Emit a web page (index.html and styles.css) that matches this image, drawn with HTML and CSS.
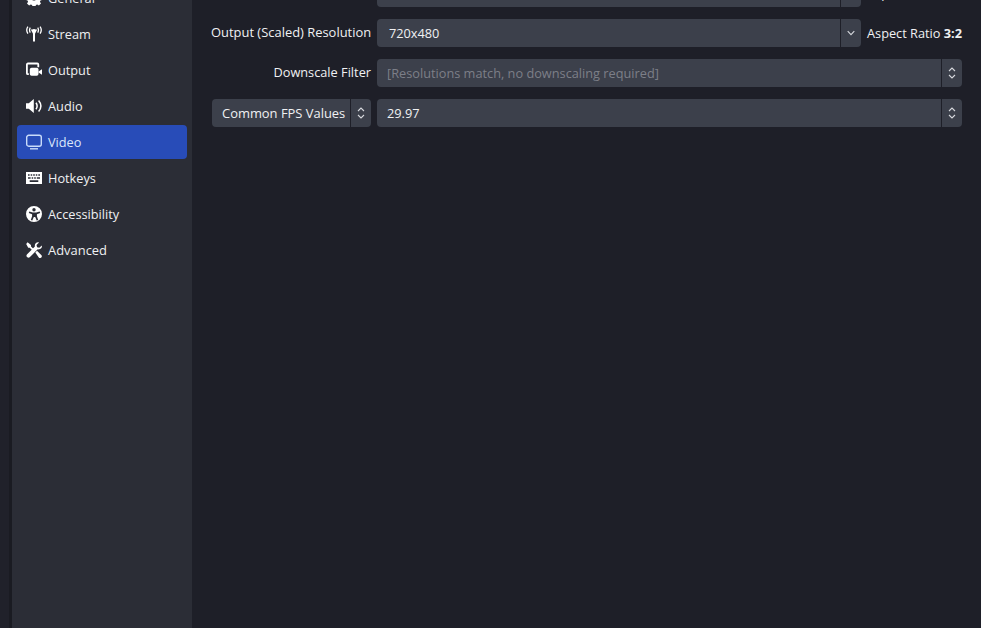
FILE: index.html
```html
<!DOCTYPE html>
<html lang="en">
<head>
<meta charset="utf-8">
<title>Settings</title>
<link rel="stylesheet" href="styles.css">
</head>
<body>
<div class="window">
  <nav class="sidebar">
    <a class="item"><svg class="icon" viewBox="0 0 16 16"><path fill="#fff" fill-rule="evenodd" d="M6.500 0h3l.4 2 1.300.6 1.700-1.100 2.100 2.100-1.100 1.700.6 1.300 2 .4v3l-2 .4-.6 1.300 1.100 1.700-2.100 2.100-1.700-1.100-1.300.6-.4 2h-3l-.4-2-1.300-.6-1.700 1.100-2.100-2.100 1.100-1.700-.6-1.300-2-.4v-3l2-.4.6-1.300L1.400 3.600 3.500 1.500l1.700 1.100 1.300-.6zM8 5.500a2.500 2.500 0 1 0 0 5 2.500 2.500 0 0 0 0-5z"/></svg><span>General</span></a>
    <a class="item"><svg class="icon" viewBox="0 0 16 16"><path fill="#fff" d="M4.800 3.600h6.400L9 7.800v7.700H7V7.800z"/><circle cx="8" cy="4.600" r="1.700" fill="#fff"/><path fill="none" stroke="#fff" stroke-width="1.300" d="M4.300 1.600C3.300 3.200 3.300 5 4.300 6.600M1.900.6C.3 3 .3 5.200 1.900 7.600M11.700 1.600c1 1.600 1 3.400 0 5M14.100.6c1.600 2.400 1.600 4.600 0 7"/></svg><span>Stream</span></a>
    <a class="item"><svg class="icon" viewBox="0 0 16 16"><path fill="none" stroke="#fff" stroke-width="1.800" d="M2.800 12.200H1.900a1 1 0 0 1-1-1V2.500a1 1 0 0 1 1-1h9.400a1 1 0 0 1 1 1v2.700"/><rect x="3.800" y="5.800" width="8.700" height="8" rx="1.800" fill="#fff"/><path fill="#fff" d="M12.500 9.500l3.500-2.300v5.600l-3.500-2.300z"/></svg><span>Output</span></a>
    <a class="item"><svg class="icon" viewBox="0 0 16 16"><path fill="#fff" d="M0 5.200h2.800L7.800 1v14l-5-4.200H0z"/><path fill="none" stroke="#fff" stroke-width="1.500" d="M10 4.800c1.400 2 1.400 4.400 0 6.400M12.600 2.400c2.800 3.400 2.800 7.800 0 11.200"/></svg><span>Audio</span></a>
    <a class="item active"><svg class="icon" viewBox="0 0 16 16"><rect x=".7" y="1.300" width="14.600" height="10.900" rx="2" fill="none" stroke="#c9dbfa" stroke-width="1.400"/><path stroke="#c9dbfa" stroke-width="1.400" d="M4 14.800h8"/></svg><span>Video</span></a>
    <a class="item"><svg class="icon" viewBox="0 0 16 16"><path fill="#fff" fill-rule="evenodd" d="M0 2h16v12H0zM2 4.200v1.600h1.600V4.200zm2.700 0v1.600h1.500V4.200zm2.500 0v1.600h1.600V4.200zm2.600 0v1.600h1.500V4.200zm2.500 0v1.600H14V4.200zM2 7.200v1.600h2.600V7.200zm3.700 0v1.600h1.500V7.200zm2.500 0v1.600h1.600V7.200zm2.600 0v1.600H14V7.200zM3.700 10.300v1.700h8.600v-1.700z"/></svg><span>Hotkeys</span></a>
    <a class="item"><svg class="icon" viewBox="0 0 16 16"><path fill="#fff" fill-rule="evenodd" d="M8 0a8 8 0 1 1 0 16A8 8 0 0 1 8 0zm0 2a1.700 1.700 0 1 0 0 3.400A1.700 1.700 0 0 0 8 2zM3.300 5.400l-.5 1.500 3.300 1.300v2l-1.300 3.800 1.500.5 1.500-3.500h1.400l1.500 3.500 1.500-.5-1.300-3.800v-2l3.300-1.300-.5-1.500-3.500 1.100H6.800z"/></svg><span>Accessibility</span></a>
    <a class="item"><svg class="icon" viewBox="0 0 16 16"><path fill="#fff" d="M1.600.3L5 2.900v1.500l3.400 3.400-1.300 1.300-3.400-3.400H2.200L.2 2z"/><path fill="#fff" d="M15.800 3.400l-2.500 2.400-2.200-.6-.6-2.200L13 .4C10.500-.4 8.300 2 8.900 4.500L.9 12.500a2 2 0 0 0 2.800 2.800l8-8c2.600.6 4.900-1.500 4.100-3.900z"/><path fill="#fff" d="M9.300 10.500L11 8.800l4.500 4.400a1.800 1.800 0 0 1-2.500 2.500z"/></svg><span class="wider">Advanced</span></a>
  </nav>
  <main class="content">
    <div class="row">
      <span class="label">Base (Canvas) Resolution</span>
      <div class="field wide"><span class="value edit">720x480</span><span class="drop"><svg viewBox="0 0 10 14"><path d="M1.700 5.200L5 8.700l3.300-3.500"/></svg></span></div>
      <span class="ratio">Aspect Ratio <b>3:2</b></span>
    </div>
    <div class="row">
      <span class="label wider">Output (Scaled) Resolution</span>
      <div class="field wide"><span class="value edit">720x480</span><span class="drop"><svg viewBox="0 0 10 14"><path d="M1.700 5.200L5 8.700l3.300-3.500"/></svg></span></div>
      <span class="ratio">Aspect Ratio <b>3:2</b></span>
    </div>
    <div class="row">
      <span class="label">Downscale Filter</span>
      <div class="field"><span class="value dim">[Resolutions match, no downscaling required]</span><span class="drop"><svg viewBox="0 0 10 14"><path d="M2 5l3-3 3 3M2 9l3 3 3-3"/></svg></span></div>
    </div>
    <div class="row">
      <div class="field fps"><span class="value wider">Common FPS Values</span><span class="drop"><svg viewBox="0 0 10 14"><path d="M2 5l3-3 3 3M2 9l3 3 3-3"/></svg></span></div>
      <div class="field"><span class="value">29.97</span><span class="drop"><svg viewBox="0 0 10 14"><path d="M2 5l3-3 3 3M2 9l3 3 3-3"/></svg></span></div>
    </div>
  </main>
</div>
</body>
</html>
```
FILE: styles.css
```css
* { box-sizing: border-box; }
html, body { margin: 0; height: 100%; overflow: hidden; }
body {
  background: #1e1f28;
  color: #f0f1f3;
  font: 12.75px/18px "Open Sans", "Noto Sans", sans-serif;
}
.window { display: flex; height: 628px; }
.window::before {
  content: "";
  flex: none;
  width: 12px;
  background: linear-gradient(90deg, #20212a 0, #20212a 9px, #1a1b22 9px);
}
.sidebar {
  flex: none;
  width: 180px;
  background: #2b2d36;
  padding: 0 5px;
  display: flex;
  flex-direction: column;
  gap: 2px;
  overflow: hidden;
}
.item {
  flex: none;
  height: 34px;
  display: flex;
  align-items: center;
  gap: 6px;
  padding: 0 9px;
  border-radius: 4px;
  color: #eff0f2;
}
.item:first-child { margin-top: -19px; }
.item.active { background: #284cb8; color: #dbe6fb; }
.icon { width: 16px; height: 16px; flex: none; }
.content {
  flex: 1;
  min-width: 0;
  padding: 0 19px;
  display: flex;
  flex-direction: column;
  gap: 12px;
  margin-top: -21px;
}
.row { display: flex; align-items: center; gap: 6px; height: 28px; flex: none; }
.label {
  width: 160px;
  flex: none;
  text-align: right;
  white-space: nowrap;
  margin-bottom: 2px;
}
.wider { font-size: 12.93px; }
.field {
  flex: 1;
  min-width: 0;
  height: 28px;
  display: flex;
  background: #3c404b;
  border-radius: 4px;
  overflow: hidden;
}
.field.fps { flex: none; width: 159px; margin-left: 1px; }
.value {
  flex: 1;
  min-width: 0;
  padding-left: 10px;
  line-height: 28px;
  white-space: nowrap;
}
.value.edit { padding-left: 12px; }
.value.dim { color: #7c7f88; }
.drop {
  flex: none;
  width: 21px;
  border-left: 1px solid #1e1f28;
  display: flex;
  align-items: center;
  justify-content: center;
}
.drop svg { width: 10px; height: 14px; fill: none; stroke: #d5d7dc; stroke-width: 1.100; }
.ratio { flex: none; }
.ratio b { font-weight: 700; }
```
